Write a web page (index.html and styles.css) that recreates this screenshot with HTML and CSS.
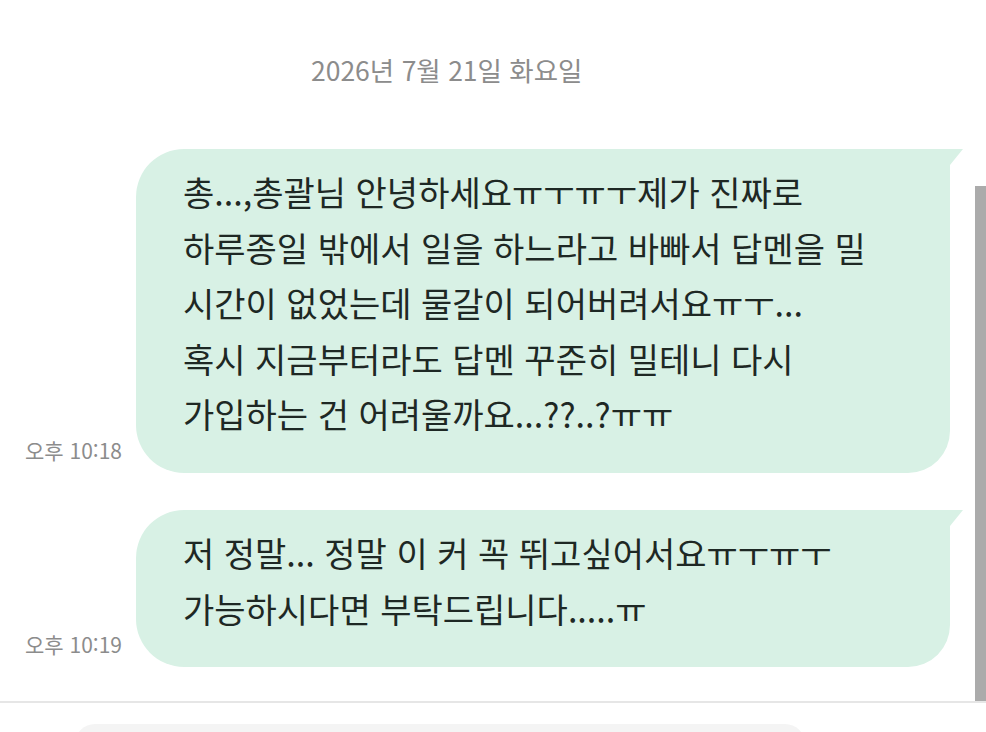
FILE: index.html
```html
<!DOCTYPE html>
<html lang="ko">
<head>
    <meta charset="UTF-8">
    <meta name="viewport" content="width=device-width, initial-scale=1.0">
    <title>채팅</title>
    <link rel="stylesheet" href="styles.css">
</head>
<body>
    <div class="chat">
        <div class="date">2026년 7월 21일 화요일</div>

        <div class="row">
            <div class="time">오후 10:18</div>
            <div class="bubble">총...,총괄님 안녕하세요ㅠㅜㅠㅜ제가 진짜로<br>하루종일 밖에서 일을 하느라고 바빠서 답멘을 밀<br>시간이 없었는데 물갈이 되어버려서요ㅠㅜ...<br>혹시 지금부터라도 답멘 꾸준히 밀테니 다시<br>가입하는 건 어려울까요...??..?ㅠㅠ</div>
        </div>

        <div class="row">
            <div class="time">오후 10:19</div>
            <div class="bubble">저 정말... 정말 이 커 꼭 뛰고싶어서요ㅠㅜㅠㅜ<br>가능하시다면 부탁드립니다.....ㅠ</div>
        </div>

        <div class="scrollbar"></div>
    </div>

    <div class="composer">
        <div class="input"></div>
    </div>
</body>
</html>
```

FILE: styles.css
```css
body {
    font-family: "Noto Sans CJK KR", "Noto Sans", sans-serif;
    margin: 0;
    padding: 0;
    background-color: #FFFFFF;
    color: #1E2824;
    width: 986px;
    height: 732px;
    overflow: hidden;
}
.chat {
    position: relative;
    height: 703px;
    padding-top: 50px;
    box-sizing: border-box;
    border-bottom: 2px solid #E6E6E6;
}
.date {
    font-size: 26.5px;
    line-height: 40px;
    color: #8C8C8C;
    padding-left: 311px;
    margin-bottom: 59px;
}
.row {
    display: flex;
    align-items: flex-end;
    margin-bottom: 37px;
}
.time {
    width: 136px;
    box-sizing: border-box;
    padding-left: 25px;
    padding-bottom: 10px;
    font-size: 21px;
    line-height: 26px;
    color: #8C8C8C;
}
.bubble {
    position: relative;
    width: 814px;
    box-sizing: border-box;
    background-color: #D8F1E5;
    border-radius: 48px 0 42px 48px;
    padding: 15px 20px 31px 47px;
    font-size: 34px;
    line-height: 55.6px;
    white-space: nowrap;
}
.bubble::after {
    content: "";
    position: absolute;
    top: 0;
    right: -13px;
    width: 13px;
    height: 16px;
    background-color: #D8F1E5;
    clip-path: polygon(0 0, 100% 0, 0 100%);
}
.scrollbar {
    position: absolute;
    right: 0;
    top: 186px;
    width: 11px;
    height: 515px;
    background-color: #ABABAB;
}
.composer {
    padding: 21px 0 0 75px;
}
.input {
    width: 730px;
    height: 40px;
    background-color: #F4F4F4;
    border-radius: 20px;
}
```
